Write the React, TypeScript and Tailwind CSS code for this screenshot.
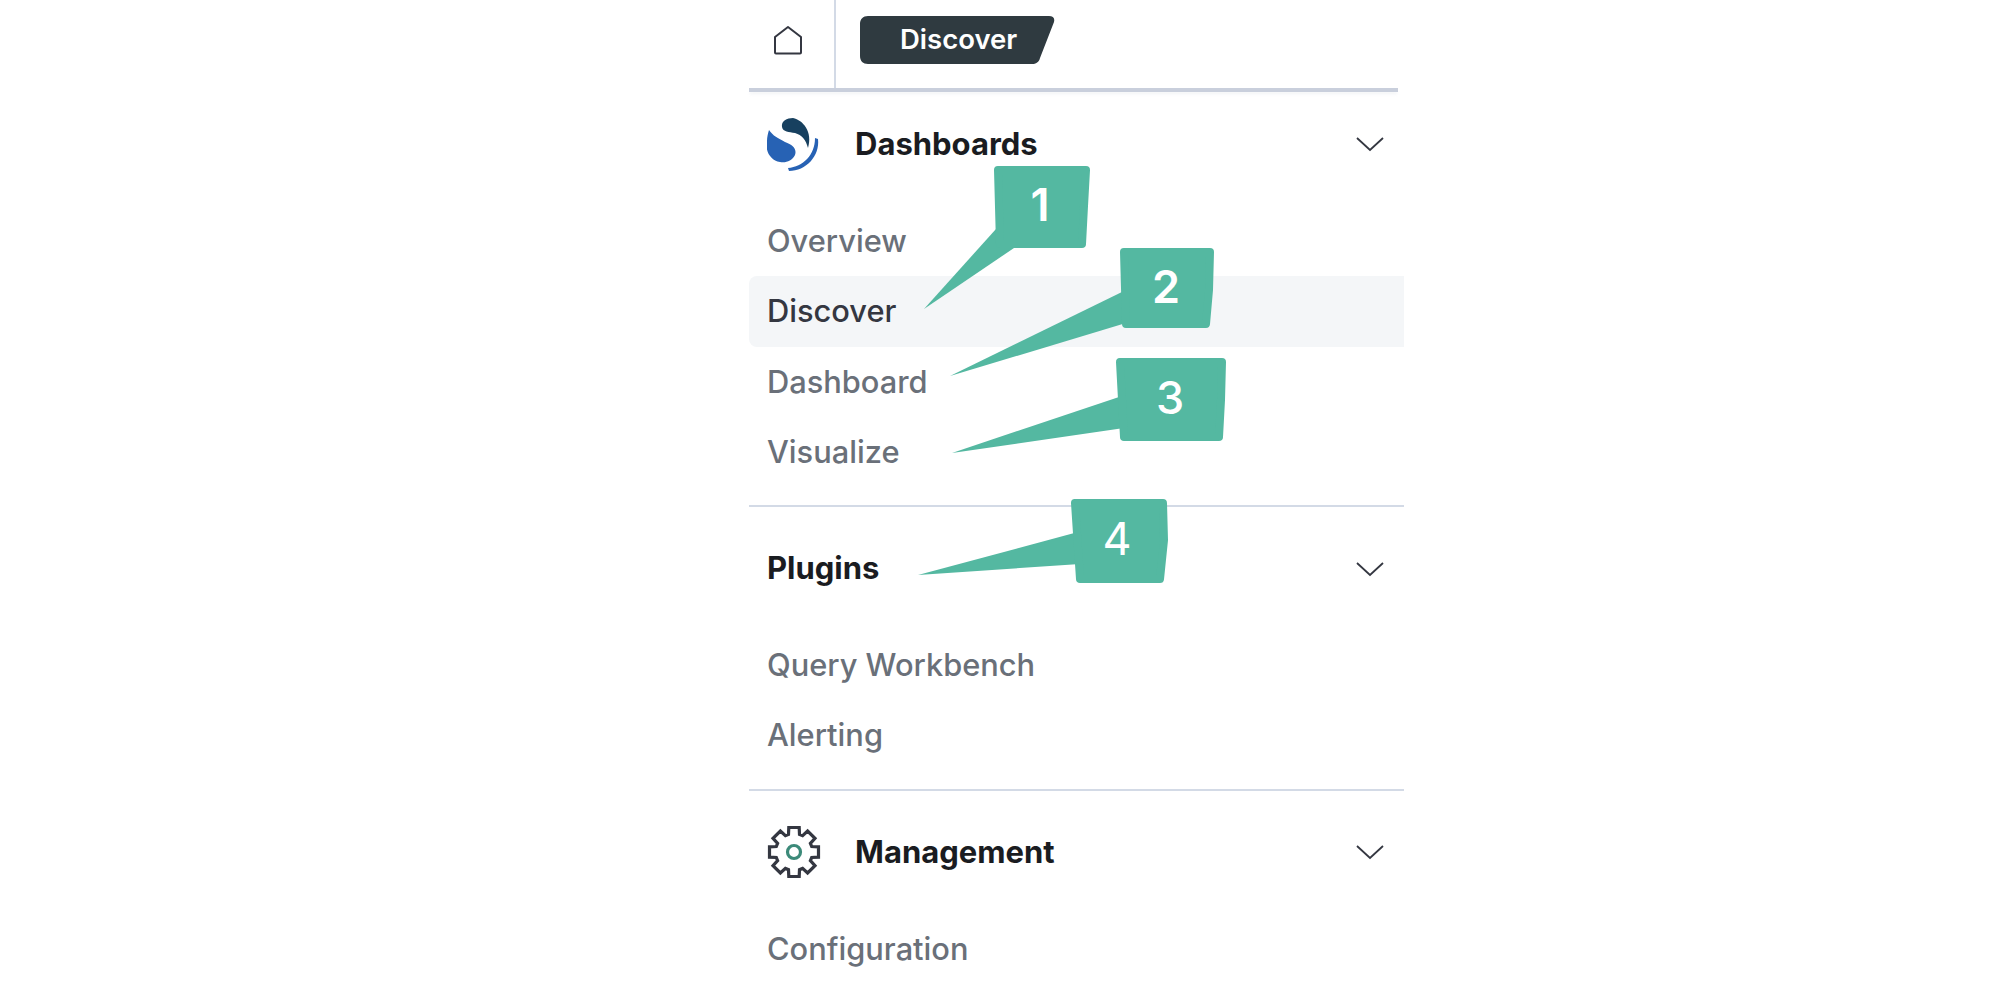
const FONT = "font-['Inter','Liberation_Sans',sans-serif]";

// Gear outline: eight teeth, root and tip radius around the centre of a 54 box
const gearPoints = Array.from({ length: 8 }, (_, i) => {
  const a = (i * Math.PI) / 4 - Math.PI / 2;
  return [
    [18.5, a - 0.3],
    [25, a - 0.21],
    [25, a + 0.21],
    [18.5, a + 0.3],
  ]
    .map(([r, t]) => `${(27 + r * Math.cos(t)).toFixed(1)},${(27 + r * Math.sin(t)).toFixed(1)}`)
    .join(" ");
}).join(" ");

const CALLOUTS = [
  { label: "1", body: "998,170 1086,170 1084,206 1082,244 1000,244", tail: "996,229 1014,248 924,309", x: 1040, y: 221, weight: 600 },
  { label: "2", body: "1124,252 1210,252 1209,290 1206,324 1126,324", tail: "1124,291 1126,323 950,376", x: 1166, y: 303, weight: 600 },
  { label: "3", body: "1120,362 1222,362 1221,400 1219,437 1124,437", tail: "1122,396 1124,428 952,453", x: 1170, y: 414, weight: 500 },
  { label: "4", body: "1075,503 1163,503 1164,540 1160,579 1080,579", tail: "1078,532 1080,564 918,575", x: 1117, y: 555, weight: 400 },
];

function Chevron() {
  return (
    <svg width="28" height="16" viewBox="0 0 28 16" fill="none" stroke="#343741" strokeWidth="1.8" className="mr-[20px]">
      <polyline points="1,2 14,14 27,2" />
    </svg>
  );
}

function SectionHeader({ title, icon, className }: { title: string; icon?: React.ReactNode; className: string }) {
  return (
    <div className={`flex items-center justify-between pl-[18px] ${className}`}>
      <div className="flex items-center">
        {icon && <div className="mr-[34px] h-[54px] w-[54px] shrink-0">{icon}</div>}
        <span className="text-[31px] font-bold text-[#1a1c21]">{title}</span>
      </div>
      <Chevron />
    </div>
  );
}

function NavItem({ label, active }: { label: string; active?: boolean }) {
  return (
    <div
      className={`flex h-[70.25px] items-center rounded-l-lg pl-[18px] text-[30.8px] font-medium ${
        active ? "bg-[#f4f6f8] text-[#343741]" : "text-[#6a7079]"
      }`}
    >
      {label}
    </div>
  );
}

function Logo() {
  return (
    <svg viewBox="12 12 54 54" width="54" height="54">
      <path d="M27 22C26 16 32 13 38 13C48 15 58 27 53 43C51 35 47 30 40 28C34 27 28 27 27 22Z" fill="#17405f" />
      <path d="M14 25C18 31 23 33 30 37C38 40 42 44 40 50C37 56 31 58 25 57C15 55 10 46 12 36C12 32 13 28 14 25Z" fill="#2762b4" />
      <path d="M60 33L63 34C65 51 51 66 34 66L33 63C48 62 60 50 60 33Z" fill="#2762b4" />
    </svg>
  );
}

function Gear() {
  return (
    <svg viewBox="0 0 54 54" width="54" height="54" fill="none">
      <polygon points={gearPoints} stroke="#343741" strokeWidth="3.2" strokeLinejoin="miter" />
      <circle cx="27" cy="27" r="6.5" stroke="#3c8a79" strokeWidth="3.2" />
    </svg>
  );
}

function Header() {
  return (
    <div className="relative mr-[6px] flex h-[92px] items-start">
      <div className="flex h-[88px] w-[87px] shrink-0 items-start border-r-2 border-[#d3dae6] pl-[25px] pt-[25px]">
        <svg width="28" height="30" viewBox="0 0 28 30" fill="none" stroke="#343741" strokeWidth="2" strokeLinejoin="round">
          <path d="M14 2L27 12V27.5C27 28 26.5 28.5 26 28.5H2C1.5 28.5 1 28 1 27.5V12Z" />
        </svg>
      </div>
      <div className="relative ml-[24px] mt-[16px] flex h-[48px] w-[195px] items-center text-[27.5px] font-semibold text-white">
        <svg className="absolute inset-0" width="195" height="48" viewBox="0 0 195 48">
          <path d="M8 0H189C193 0 195 2 194 6L180 42C179 46 176 48 172 48H8C3 48 0 45 0 40V8C0 3 3 0 8 0Z" fill="#2f3a40" />
        </svg>
        <span className="relative ml-[40px]">Discover</span>
      </div>
      <div className="absolute inset-x-0 bottom-0 h-[4px] bg-[#c9cfdc] shadow-[0_3px_3px_-1px_rgba(201,207,220,0.3)]" />
    </div>
  );
}

export default function App() {
  return (
    <div className={`relative h-[996px] w-[1998px] overflow-hidden bg-white pl-[749px] ${FONT}`}>
      <div className="w-[655px]">
        <Header />
        <SectionHeader title="Dashboards" icon={<Logo />} className="mb-[10px] h-[104px]" />
        <NavItem label="Overview" />
        <NavItem label="Discover" active />
        <NavItem label="Dashboard" />
        <NavItem label="Visualize" />
        <div className="mt-[18px] border-t-2 border-[#d3dae6]" />
        <SectionHeader title="Plugins" className="h-[123px]" />
        <NavItem label="Query Workbench" />
        <NavItem label="Alerting" />
        <div className="mt-[18px] border-t-2 border-[#d3dae6]" />
        <SectionHeader title="Management" icon={<Gear />} className="h-[123px]" />
        <NavItem label="Configuration" />
      </div>

      {/* Annotation callouts drawn over the menu */}
      <svg className="absolute left-0 top-0" width="1998" height="996" viewBox="0 0 1998 996">
        {CALLOUTS.map((c) => (
          <g key={c.label}>
            <polygon points={c.tail} fill="#54b8a1" />
            <polygon points={c.body} fill="#54b8a1" stroke="#54b8a1" strokeWidth="8" strokeLinejoin="round" />
            <text x={c.x} y={c.y} textAnchor="middle" fontSize="45" fontWeight={c.weight} fill="#fff">
              {c.label}
            </text>
          </g>
        ))}
      </svg>
    </div>
  );
}
